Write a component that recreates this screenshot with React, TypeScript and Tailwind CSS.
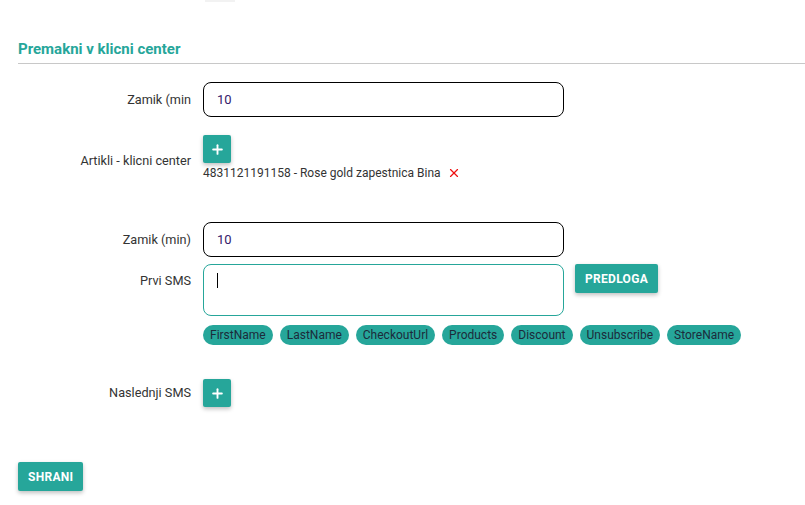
import { Plus, X } from "lucide-react";

const chips = ["FirstName", "LastName", "CheckoutUrl", "Products", "Discount", "Unsubscribe", "StoreName"];

function PlusButton() {
  return (
    <button className="w-[28px] h-[28px] flex items-center justify-center rounded-[2px] bg-[#26a69a] text-white shadow-[0_2px_4px_rgba(0,0,0,0.25)]">
      <Plus size={15} strokeWidth={3} />
    </button>
  );
}

function Label({ children, className = "" }: { children: React.ReactNode; className?: string }) {
  return (
    <label className={`w-[185px] shrink-0 pr-[12px] text-right text-[12.7px] text-[#333] ${className}`}>
      {children}
    </label>
  );
}

export default function App() {
  return (
    <div className="bg-white min-h-screen w-[805px] h-[505px] overflow-hidden font-['Roboto',sans-serif]">
      <div className="ml-[205px] h-[2px] w-[30px] bg-[#f2f2f2]" />

      <div className="pl-[18px] pt-[37px]">
        <h2 className="text-[15px] font-bold text-[#26a69a] leading-[20px] pb-[4px] border-b border-[#c8c8c8]">
          Premakni v klicni center
        </h2>

        <div className="flex items-center mt-[18px]">
          <Label>Zamik (min</Label>
          <input
            defaultValue="10"
            className="w-[361px] h-[35px] px-[13px] border border-black rounded-[8px] text-[13px] text-[#35206b] outline-none"
          />
        </div>

        <div className="flex items-center mt-[18px]">
          <Label className="pt-[4px]">Artikli - klicni center</Label>
          <div className="flex flex-col">
            <PlusButton />
            <div className="flex items-center text-[12px] text-[#333] leading-[18px] mt-[1px]">
              <span>4831121191158 - Rose gold zapestnica Bina</span>
              <X size={14} strokeWidth={2} className="text-[#ee1111] ml-[6px]" />
            </div>
          </div>
        </div>

        <div className="flex items-center mt-[40px]">
          <Label>Zamik (min)</Label>
          <input
            defaultValue="10"
            className="w-[361px] h-[35px] px-[13px] border border-black rounded-[8px] text-[13px] text-[#35206b] outline-none"
          />
        </div>

        <div className="flex items-start mt-[7px]">
          <Label className="pt-[7px]">Prvi SMS</Label>
          <div className="flex flex-col">
            <div className="flex items-start gap-[11px]">
              <div className="w-[361px] h-[52px] border border-[#26a69a] rounded-[8px] px-[13px] pt-[8px]">
                <div className="w-[1px] h-[15px] bg-black" />
              </div>
              <button className="h-[29px] px-[10px] rounded-[2px] bg-[#26a69a] text-white text-[12px] font-bold tracking-[0.3px] shadow-[0_2px_4px_rgba(0,0,0,0.25)]">
                PREDLOGA
              </button>
            </div>
            <div className="flex gap-[7px] mt-[9px]">
              {chips.map((c) => (
                <span
                  key={c}
                  className="h-[20px] px-[7px] rounded-full bg-[#26a69a] text-[12px] leading-[20px] text-[#1c2b3a]"
                >
                  {c}
                </span>
              ))}
            </div>
          </div>
        </div>

        <div className="flex items-center mt-[34px]">
          <Label>Naslednji SMS</Label>
          <PlusButton />
        </div>

        <button className="mt-[55px] h-[29px] px-[10px] rounded-[2px] bg-[#26a69a] text-white text-[12px] font-bold tracking-[0.3px] shadow-[0_2px_4px_rgba(0,0,0,0.25)]">
          SHRANI
        </button>
      </div>
    </div>
  );
}
